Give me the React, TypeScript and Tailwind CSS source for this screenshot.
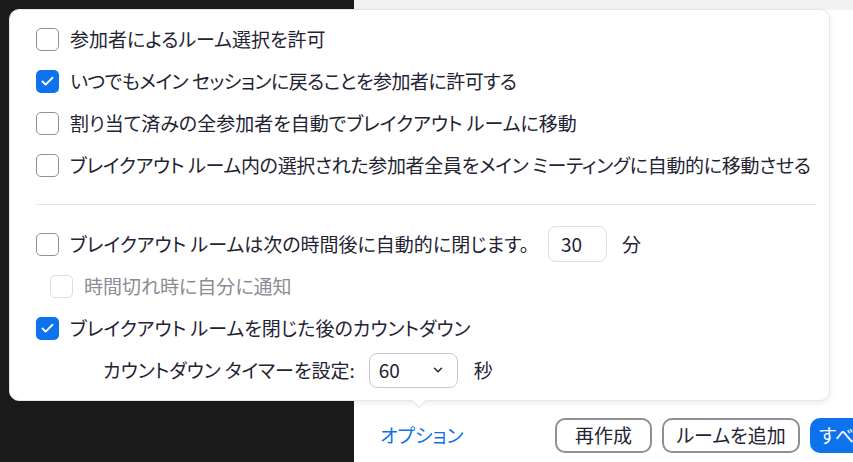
import { Check, ChevronDown } from "lucide-react";

const font = { fontFamily: '"Noto Sans CJK JP", "Noto Sans", sans-serif' };

function Box({ checked, disabled }: { checked?: boolean; disabled?: boolean }) {
    if (checked) {
        return (
            <span className="flex h-[23px] w-[23px] shrink-0 items-center justify-center rounded-[5px] bg-[#0e72ed]">
                <Check className="h-[15px] w-[15px] text-white" strokeWidth={3} />
            </span>
        );
    }
    return (
        <span
            className={`h-[23px] w-[23px] shrink-0 rounded-[5px] border-[1.5px] bg-white ${disabled ? "border-[#dcdce2]" : "border-[#8f8f94]"}`}
        />
    );
}

function Row({ checked, disabled, children, className = "" }: { checked?: boolean; disabled?: boolean; children: React.ReactNode; className?: string }) {
    return (
        <div className={`flex h-[42px] items-center gap-[11px] whitespace-nowrap ${className}`}>
            <Box checked={checked} disabled={disabled} />
            <span className={disabled ? "text-[#8b8b93]" : "text-[#232333]"}>{children}</span>
        </div>
    );
}

export default function App() {
    return (
        <div
            className="relative flex h-[462px] w-[853px] overflow-hidden text-[19px] [font-feature-settings:'palt']"
            style={font}
        >
            <div className="w-[354px] shrink-0 bg-[#1b1b1b]" />
            <div className="flex min-w-0 flex-1 flex-col bg-white">
                <div className="h-[10px] bg-[#f2f2f4]" />
                <div className="flex-1" />
                <div className="mb-[9px] flex h-[35px] items-center overflow-hidden whitespace-nowrap pl-[26px]">
                    <span className="w-[77px] shrink-0 text-[#0e72ed]">オプション</span>
                    <button className="ml-[98px] h-[35px] w-[97px] shrink-0 rounded-[10px] border-2 border-[#8f8f94] text-[#232333]">
                        再作成
                    </button>
                    <button className="ml-[10px] h-[35px] w-[138px] shrink-0 rounded-[10px] border-2 border-[#8f8f94] text-[#232333]">
                        ルームを追加
                    </button>
                    <button className="ml-[10px] h-[35px] w-[200px] shrink-0 rounded-[10px] bg-[#0e72ed] pl-[9px] text-left text-white">
                        すべてのルームを開始
                    </button>
                </div>
            </div>

            <div className="absolute left-[9px] top-[9px] w-[821px] rounded-[10px] border border-[#e6e6ea] bg-white pb-[9px] pl-[26px] pr-[13px] pt-[8px] shadow-[0_2px_6px_rgba(0,0,0,0.08)]">
                <Row>参加者によるルーム選択を許可</Row>
                <Row checked className="tracking-[-0.5px]">いつでもメイン セッションに戻ることを参加者に許可する</Row>
                <Row>割り当て済みの全参加者を自動でブレイクアウト ルームに移動</Row>
                <Row className="tracking-[-0.3px]">ブレイクアウト ルーム内の選択された参加者全員をメイン ミーティングに自動的に移動させる</Row>

                <div className="mb-[18px] mt-[18px] h-px bg-[#e4e4e8]" />

                <div className="flex h-[42px] items-center gap-[11px] whitespace-nowrap">
                    <Box />
                    <span className="text-[#232333]">ブレイクアウト ルームは次の時間後に自動的に閉じます。</span>
                    <span className="ml-[8px] flex h-[36px] w-[59px] items-center rounded-[8px] border border-[#dcdce2] pl-[12px] text-[#232333]">
                        30
                    </span>
                    <span className="ml-[4px] text-[#232333]">分</span>
                </div>
                <Row disabled className="pl-[14px]">時間切れ時に自分に通知</Row>
                <Row checked>ブレイクアウト ルームを閉じた後のカウントダウン</Row>
                <div className="flex h-[42px] items-center whitespace-nowrap pl-[67px] text-[#232333]">
                    <span>カウントダウン タイマーを設定:</span>
                    <span className="ml-[14px] flex h-[35px] w-[89px] items-center justify-between rounded-[8px] border border-[#c9c9d3] pl-[9px] pr-[12px]">
                        60
                        <ChevronDown className="h-[14px] w-[14px] text-[#232333]" strokeWidth={2.5} />
                    </span>
                    <span className="ml-[16px]">秒</span>
                </div>

                <span className="absolute bottom-[-6px] left-[404px] h-[10px] w-[10px] rotate-45 border-b border-r border-[#e6e6ea] bg-white" />
            </div>
        </div>
    );
}
